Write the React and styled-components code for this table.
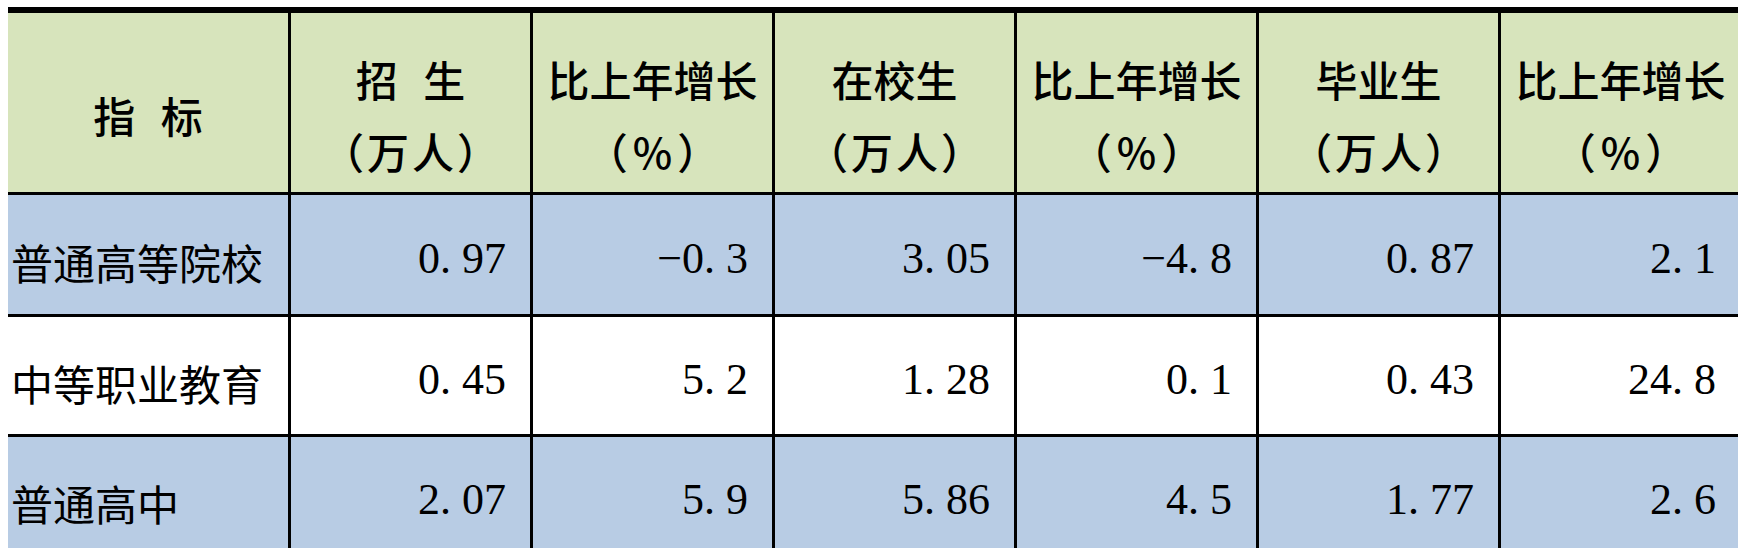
import styled, { createGlobalStyle } from "styled-components";

const GlobalStyle = createGlobalStyle`
  html, body {
    margin: 0;
    padding: 0;
    background: #ffffff;
    overflow: hidden;
  }
`;

const header = [
  { title: "指 标" },
  { title: "招 生", unit: "（万人）" },
  { title: "比上年增长", unit: "（%）" },
  { title: "在校生", unit: "（万人）" },
  { title: "比上年增长", unit: "（%）" },
  { title: "毕业生", unit: "（万人）" },
  { title: "比上年增长", unit: "（%）" },
];

const rows = [
  { name: "普通高等院校", tone: "blue", values: [0.97, -0.3, 3.05, -4.8, 0.87, 2.1] },
  { name: "中等职业教育", tone: "white", values: [0.45, 5.2, 1.28, 0.1, 0.43, 24.8] },
  { name: "普通高中", tone: "blue", values: [2.07, 5.9, 5.86, 4.5, 1.77, 2.6] },
];

const tones = {
  blue: "#b8cce4",
  white: "#ffffff",
};

// the sheet is cropped: no left/right outer border shows in the picture
const Page = styled.div`
  padding: 7px 0 0 8px;
  width: 1760px;
`;

const Sheet = styled.div`
  display: grid;
  grid-template-columns: 280px repeat(6, 239px);
  grid-template-rows: 179px 119px 117px 117px;
  column-gap: 3px;
  row-gap: 3px;
  background: #000000;
  padding: 6px 3px 0 0;
  width: max-content;
`;

const HeadCell = styled.div`
  background: #d7e4bc;
  display: flex;
  flex-direction: column;
  align-items: center;
  justify-content: center;
  padding-top: 24px;
  box-sizing: border-box;
  font-family: "Noto Sans CJK SC", sans-serif;
  font-size: 42px;
  font-weight: 500;
  line-height: 72px;
  color: #000000;
  white-space: nowrap;
  word-spacing: 16px;
`;

const Unit = styled.span`
  letter-spacing: ${(p) => p.$spread}px;
  padding-left: ${(p) => p.$spread}px;
`;

const LabelCell = styled.div`
  background: ${(p) => tones[p.$tone]};
  display: flex;
  align-items: center;
  padding: 14px 0 0 3px;
  box-sizing: border-box;
  font-family: "Noto Sans CJK SC", sans-serif;
  font-size: 42px;
  font-weight: 400;
  color: #000000;
  white-space: nowrap;
`;

const NumCell = styled.div`
  background: ${(p) => tones[p.$tone]};
  display: flex;
  align-items: center;
  justify-content: flex-end;
  padding: 7px 24px 0 0;
  box-sizing: border-box;
  font-family: "Liberation Serif", "Times New Roman", serif;
  font-size: 44px;
  color: #000000;
  white-space: pre;
`;

const fmt = (v) => String(v).replace("-", "\u2212").replace(".", ". ");

export default function App() {
  return (
    <>
      <GlobalStyle />
      <Page>
        <Sheet>
          {header.map((h, i) => (
            <HeadCell key={"h" + i}>
              <span>{h.title}</span>
              {h.unit && (
                <Unit $spread={h.unit.length > 3 ? 3 : 5}>{h.unit}</Unit>
              )}
            </HeadCell>
          ))}
          {rows.map((r) => [
            <LabelCell key={r.name} $tone={r.tone}>
              {r.name}
            </LabelCell>,
            ...r.values.map((v, j) => (
              <NumCell key={r.name + j} $tone={r.tone}>
                {fmt(v)}
              </NumCell>
            )),
          ])}
        </Sheet>
      </Page>
    </>
  );
}
